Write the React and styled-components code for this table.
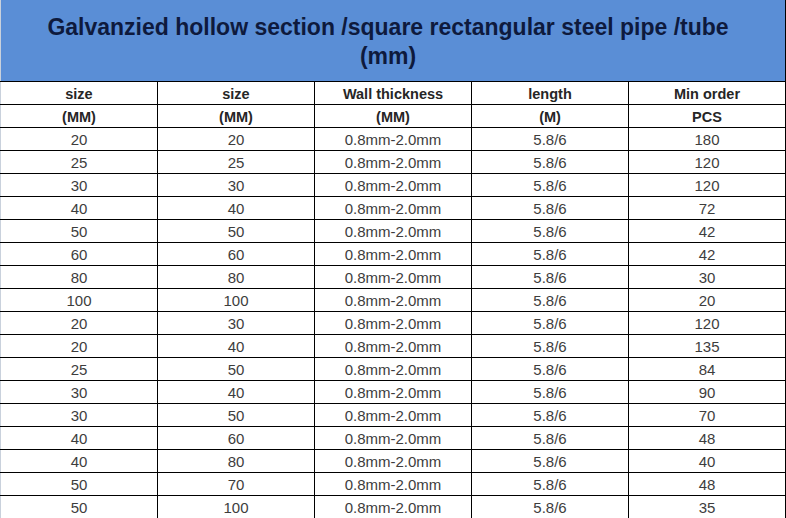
import React from "react";
import styled, { createGlobalStyle } from "styled-components";

const GlobalStyle = createGlobalStyle`
  body {
    margin: 0;
    background: #ffffff;
    font-family: "Liberation Sans", Arial, sans-serif;
  }
`;

const Table = styled.table`
  width: 786px;
  border-collapse: collapse;
  table-layout: fixed;
  border-left: 1px solid #c9d1dc;
  border-right: 1px solid #000;
`;

const TitleCell = styled.th`
  height: 79px;
  padding: 2px 38px 0 28px;
  background: #5a8ed6;
  color: #0e1a3d;
  font-size: 23px;
  font-weight: bold;
  line-height: 29px;
  text-align: center;
  border-bottom: 1px solid #000;
`;

const HeadCell = styled.th`
  height: 21px;
  padding: 1px 0 0;
  font-size: 14.5px;
  font-weight: bold;
  color: #262626;
  text-align: center;
  border-bottom: 1px solid #000;
  border-right: 1px solid #000;

  &:last-child {
    border-right: none;
  }
`;

const Cell = styled.td`
  height: 21px;
  padding: 1px 0 0;
  font-size: 15px;
  color: #3d3d3d;
  text-align: center;
  border-bottom: 1px solid #000;
  border-right: 1px solid #000;

  &:last-child {
    border-right: none;
  }
`;

const headers = [
  ["size", "size", "Wall thickness", "length", "Min order"],
  ["(MM)", "(MM)", "(MM)", "(M)", "PCS"],
];

const rows = [
  [20, 20, 180],
  [25, 25, 120],
  [30, 30, 120],
  [40, 40, 72],
  [50, 50, 42],
  [60, 60, 42],
  [80, 80, 30],
  [100, 100, 20],
  [20, 30, 120],
  [20, 40, 135],
  [25, 50, 84],
  [30, 40, 90],
  [30, 50, 70],
  [40, 60, 48],
  [40, 80, 40],
  [50, 70, 48],
  [50, 100, 35],
];

const App = () => {
  return (
    <>
      <GlobalStyle />
      <Table>
        <thead>
          <tr>
            <TitleCell colSpan={5}>
              Galvanzied hollow section /square rectangular steel pipe /tube
              (mm)
            </TitleCell>
          </tr>
          {headers.map((row, i) => (
            <tr key={i}>
              {row.map((h, j) => (
                <HeadCell key={j}>{h}</HeadCell>
              ))}
            </tr>
          ))}
        </thead>
        <tbody>
          {rows.map(([a, b, qty], i) => (
            <tr key={i}>
              <Cell>{a}</Cell>
              <Cell>{b}</Cell>
              <Cell>0.8mm-2.0mm</Cell>
              <Cell>5.8/6</Cell>
              <Cell>{qty}</Cell>
            </tr>
          ))}
        </tbody>
      </Table>
    </>
  );
};

export default App;
